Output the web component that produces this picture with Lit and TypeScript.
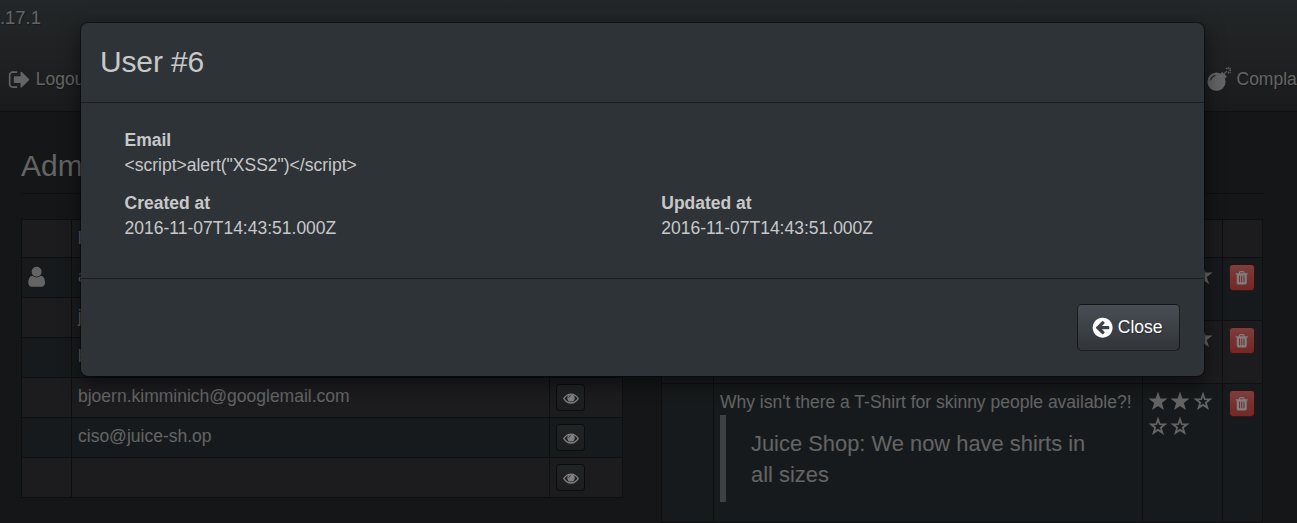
import { LitElement, html, css, svg } from "lit";
import { customElement } from "lit/decorators.js";

const icons = {
  eye: "M1664 960q-152-236-381-353 61 104 61 225 0 185-131.5 316.5t-316.5 131.5-316.5-131.5-131.5-316.5q0-121 61-225-229 117-381 353 133 205 333.5 326.5t434.5 121.5 434.5-121.5 333.5-326.5zM896 500a300 300 0 1 0 0 640 300 300 0 0 0 0-640zm848 460q0 0 0 0zm48 0q0 34-20 69-140 230-376.5 368.5t-499.5 138.5-499.5-139-376.5-368q-20-35-20-69t20-69q140-229 376.5-368t499.5-139 499.5 139 376.5 368q20 35 20 69z",
  trash: "M704 1376v-704q0-14-9-23t-23-9h-64q-14 0-23 9t-9 23v704q0 14 9 23t23 9h64q14 0 23-9t9-23zm256 0v-704q0-14-9-23t-23-9h-64q-14 0-23 9t-9 23v704q0 14 9 23t23 9h64q14 0 23-9t9-23zm256 0v-704q0-14-9-23t-23-9h-64q-14 0-23 9t-9 23v704q0 14 9 23t23 9h64q14 0 23-9t9-23zm-544-992h448l-48-117q-7-9-17-11h-317q-10 2-17 11zm928 32v64q0 14-9 23t-23 9h-96v948q0 83-47 143.5t-113 60.5h-832q-66 0-113-58.5t-47-141.5v-952h-96q-14 0-23-9t-9-23v-64q0-14 9-23t23-9h309l70-167q15-37 54-63t79-26h320q40 0 79 26t54 63l70 167h309q14 0 23 9t9 23z",
  signOut: "M704 1440q0 4 1 20t.5 26.5-3 23.5-10 19.5-20.5 6.5h-320q-119 0-203.5-84.5t-84.5-203.5v-704q0-119 84.5-203.5t203.5-84.5h320q13 0 22.5 9.5t9.5 22.5q0 4 1 20t.5 26.5-3 23.5-10 19.5-20.5 6.5h-320q-66 0-113 47t-47 113v704q0 66 47 113t113 47h312l11.5 1 11.5 3 8 5.5 7 9 2 13.5zm928-544q0 26-19 45l-544 544q-19 19-45 19t-45-19-19-45v-288h-448q-26 0-45-19t-19-45v-384q0-26 19-45t45-19h448v-288q0-26 19-45t45-19 45 19l544 544q19 19 19 45z",
  user: "M1536 1399q0 109-62.5 187t-150.5 78h-854q-88 0-150.5-78t-62.5-187q0-85 8.5-160.5t31.5-152 58.5-131 94-89 134.5-34.5q131 128 313 128t313-128q76 0 134.5 34.5t94 89 58.5 131 31.5 152 8.5 160.5zm-256-887q0 159-112.5 271.5t-271.5 112.5-271.5-112.5-112.5-271.5 112.5-271.5 271.5-112.5 271.5 112.5 112.5 271.5z",
  arrowLeft: "M1408 960v-128q0-26-19-45t-45-19h-502l189-189q19-19 19-45t-19-45l-91-91q-18-18-45-18t-45 18l-362 362-91 91q-18 18-18 45t18 45l91 91 362 362q18 18 45 18t45-18l91-91q18-18 18-45t-18-45l-189-189h502q26 0 45-19t19-45zm256-64q0 209-103 385.5t-279.5 279.5-385.5 103-385.5-103-279.5-279.5-103-385.5 103-385.5 279.5-279.5 385.5-103 385.5 103 279.5 279.5 103 385.5z",
};

const icon = (name: keyof typeof icons) =>
  html`<svg class="icon" viewBox="0 0 1792 1792"><path d=${icons[name]} /></svg>`;

const eye = html`<svg class="icon" viewBox="0 0 16 16">
  <path class="lid" d="M.8 8.6Q3.6 4.1 8 4.1T15.2 8.6Q12.4 13 8 13T.8 8.6Z" />
  <circle cx="8" cy="7.9" r="3.7" />
  <path class="glint" d="M5.9 7.6Q6.1 6 7.6 5.7" />
</svg>`;

const star = (filled: boolean) => html`<svg class="star" viewBox="0 0 20 20">
  ${filled
    ? svg`<path d="M10 .6L12.4 7.4L19.5 7.6L13.8 12L16 19L10 14.9L4 19L6.2 12L.5 7.6L7.6 7.4Z"/>`
    : svg`<path fill-rule="evenodd" d="M10 .6L12.4 7.4L19.5 7.6L13.8 12L16 19L10 14.9L4 19L6.2 12L.5 7.6L7.6 7.4ZM10 6L8.8 9.1L5.6 9.2L8.2 11.3L7.2 14.6L10 12.7L12.8 14.6L11.8 11.3L14.4 9.2L11.2 9.1Z"/>`}
</svg>`;

const bomb = html`<svg class="bomb" viewBox="0 0 24 24">
  <path fill-rule="evenodd" d="M9.5 5.6a9.1 9.1 0 1 0 0 18.2 9.1 9.1 0 0 0 0-18.2ZM2.9 13.4Q3.9 9 8.2 7.9L8.5 8.9Q5 10 4 13.6Z" />
  <path d="M13.6 6.4l1.6-1.4 4.6 4.6-1.6 1.8z" />
  <path class="fuse" d="M17 7.8Q17.8 5 20 4.2M21.2 0v2.2M24 3.4h-1.6M18.8 1l1.3 1.1M23.6 .9l-1.1 1.1M21.4 4.6v2M23.7 5.9l-1.1-1.1" />
</svg>`;

const users = ["jim@juice-sh.op", "bender@juice-sh.op", "bjoern.kimminich@googlemail.com", "ciso@juice-sh.op", ""];

@customElement("app-root")
export class AppRoot extends LitElement {
  static styles = css`
    :host {
      display: block;
      position: relative;
      height: 523px;
      overflow: hidden;
      background: #2a2c2f;
      color: #c8c8c8;
      font: 17.5px/25px "Liberation Sans", Arial, sans-serif;
    }
    * { box-sizing: border-box; }
    svg { display: block; fill: currentColor; flex: none; }
    .icon { width: 17.5px; height: 17.5px; }
    .navbar {
      height: 112px;
      display: flex;
      flex-direction: column;
      background: linear-gradient(#484e52, #3c4043 60%, #343639);
      border-bottom: 1px solid #1c1e22;
      text-shadow: 1px 1px 1px rgba(0, 0, 0, 0.3);
    }
    .version { height: 67px; padding-top: 5px; font-size: 18.4px; }
    .links { display: flex; justify-content: space-between; }
    .link { display: flex; align-items: center; gap: 4.5px; white-space: nowrap; }
    .logout { padding-left: 8px; }
    .logout .icon { width: 23.3px; height: 23.3px; }
    .complain { width: 90px; overflow: hidden; gap: 5.5px; }
    .bomb { width: 24px; height: 24px; margin-top: -2px; }
    .fuse { fill: none; stroke: currentColor; stroke-width: 1.1; }
    .content { padding: 0 34px 0 21px; }
    h1 {
      margin: 0 0 25px;
      height: 82px;
      padding-top: 37px;
      font-size: 30px;
      line-height: 33px;
      font-weight: 400;
      border-bottom: 1px solid #1c1e22;
    }
    .tables { display: grid; grid-template-columns: 602px 602px; gap: 38px; align-items: start; }
    .table { border: solid #1c1e22; border-width: 1px 0 0 1px; }
    .row { display: grid; height: 40px; background: #2e3538; }
    .row:nth-child(odd) { background: #38393f; }
    .row.head { height: 38px; }
    .users .row { grid-template-columns: 50px 478px 73px; }
    .feedback .row { grid-template-columns: 52px 429px 80px 40px; height: 63px; }
    .feedback .row:nth-child(even) { background: #2e3538; }
    .feedback .row.head { height: 38px; }
    .feedback .row.tall { height: 139px; }
    .cell { padding: 6px; border: solid #1c1e22; border-width: 0 1px 1px 0; white-space: nowrap; }
    .user .icon { width: 23.3px; height: 23.3px; margin: 1px 0 0 -3.5px; }
    .btn {
      display: flex;
      align-items: center;
      justify-content: center;
      border: 1px solid rgba(0, 0, 0, 0.6);
      border-radius: 4px;
      color: #fff;
      background: linear-gradient(#484e55, #3a3f44 60%, #313539);
    }
    .view { width: 29px; height: 27px; background: linear-gradient(#42484b, #373a3e); }
    .view .icon { width: 16px; height: 16px; }
    .lid, .glint { fill: none; stroke: currentColor; stroke-width: 1.3; }
    .glint { stroke: #3c4145; stroke-width: 0.9; }
    .del {
      width: 26px;
      height: 27px;
      background: linear-gradient(#f87f7c, #ee5f5b 60%, #ec504c);
    }
    .del .icon { width: 15.5px; height: 15.5px; }
    .stars { display: flex; flex-wrap: wrap; align-content: flex-start; gap: 5px 2.5px; padding: 7px 4px 0 4.5px; }
    .star { width: 20px; height: 20px; }
    .comment { padding-top: 6px; }
    blockquote {
      width: 412px;
      height: 87px;
      margin: 0;
      padding: 13px 25px;
      border-left: 6px solid #7a8288;
      font-size: 21.9px;
      line-height: 31px;
      white-space: normal;
    }
    .backdrop { position: absolute; inset: 0; background: rgba(0, 0, 0, 0.5); }
    .modal {
      position: absolute;
      left: 80px;
      top: 22px;
      width: 1125px;
      height: 355px;
      display: flex;
      flex-direction: column;
      background: #2e3338;
      background-clip: padding-box;
      border: 1px solid rgba(0, 0, 0, 0.35);
      border-radius: 8px;
      box-shadow: 0 6px 19px rgba(0, 0, 0, 0.5);
    }
    .title { height: 80px; padding: 22px 19px; font-size: 30px; line-height: 33px; letter-spacing: -0.15px; border-bottom: 1px solid #1c1e22; }
    .body { flex: 1; padding: 25px 43px 23px 43.5px; display: grid; grid-template-columns: 1fr 1fr; grid-template-rows: 63px 50px; column-gap: 37px; }
    .wide { grid-column: 1 / -1; }
    .footer { height: 98px; padding: 25px 24.5px; border-top: 1px solid #1c1e22; display: flex; justify-content: flex-end; }
    .close {
      width: 103px;
      height: 47px;
      gap: 3px;
      padding-right: 2px;
      border-radius: 5px;
      text-shadow: 1px 1px 1px rgba(0, 0, 0, 0.3);
    }
    .close .icon { width: 23.3px; height: 23.3px; }
  `;

  private deleteButton() {
    return html`<div class="btn del">${icon("trash")}</div>`;
  }

  render() {
    return html`
      <div class="navbar">
        <div class="version">.17.1</div>
        <div class="links">
          <div class="link logout">${icon("signOut")}<span>Logout</span></div>
          <div class="link complain">${bomb}<span>Complain?</span></div>
        </div>
      </div>
      <div class="content">
        <h1>Administration</h1>
        <div class="tables">
          <div class="table users">
            <div class="row head"><div class="cell"></div><div class="cell"><b>Email</b></div><div class="cell"></div></div>
            <div class="row">
              <div class="cell user">${icon("user")}</div><div class="cell">admin@juice-sh.op</div><div class="cell"></div>
            </div>
            ${users.map((u) => html`<div class="row">
              <div class="cell"></div><div class="cell">${u}</div>
              <div class="cell"><div class="btn view">${eye}</div></div>
            </div>`)}
          </div>
          <div class="table feedback">
            <div class="row head"><div class="cell"></div><div class="cell"></div><div class="cell"></div><div class="cell"></div></div>
            ${[0, 1].map(() => html`<div class="row">
              <div class="cell"></div><div class="cell"></div>
              <div class="cell stars">${[1, 1, 1].map(() => star(true))}</div>
              <div class="cell">${this.deleteButton()}</div>
            </div>`)}
            <div class="row tall">
              <div class="cell"></div>
              <div class="cell comment">Why isn't there a T-Shirt for skinny people available?!
                <blockquote>Juice Shop: We now have shirts in all sizes</blockquote>
              </div>
              <div class="cell stars">${[true, true, false, false, false].map(star)}</div>
              <div class="cell">${this.deleteButton()}</div>
            </div>
          </div>
        </div>
      </div>
      <div class="backdrop"></div>
      <div class="modal">
        <div class="title">User #6</div>
        <div class="body">
          <div class="wide"><b>Email</b><br />${'<script>alert("XSS2")</script>'}</div>
          <div><b>Created at</b><br />2016-11-07T14:43:51.000Z</div>
          <div><b>Updated at</b><br />2016-11-07T14:43:51.000Z</div>
        </div>
        <div class="footer"><div class="btn close">${icon("arrowLeft")}<span>Close</span></div></div>
      </div>
    `;
  }
}
